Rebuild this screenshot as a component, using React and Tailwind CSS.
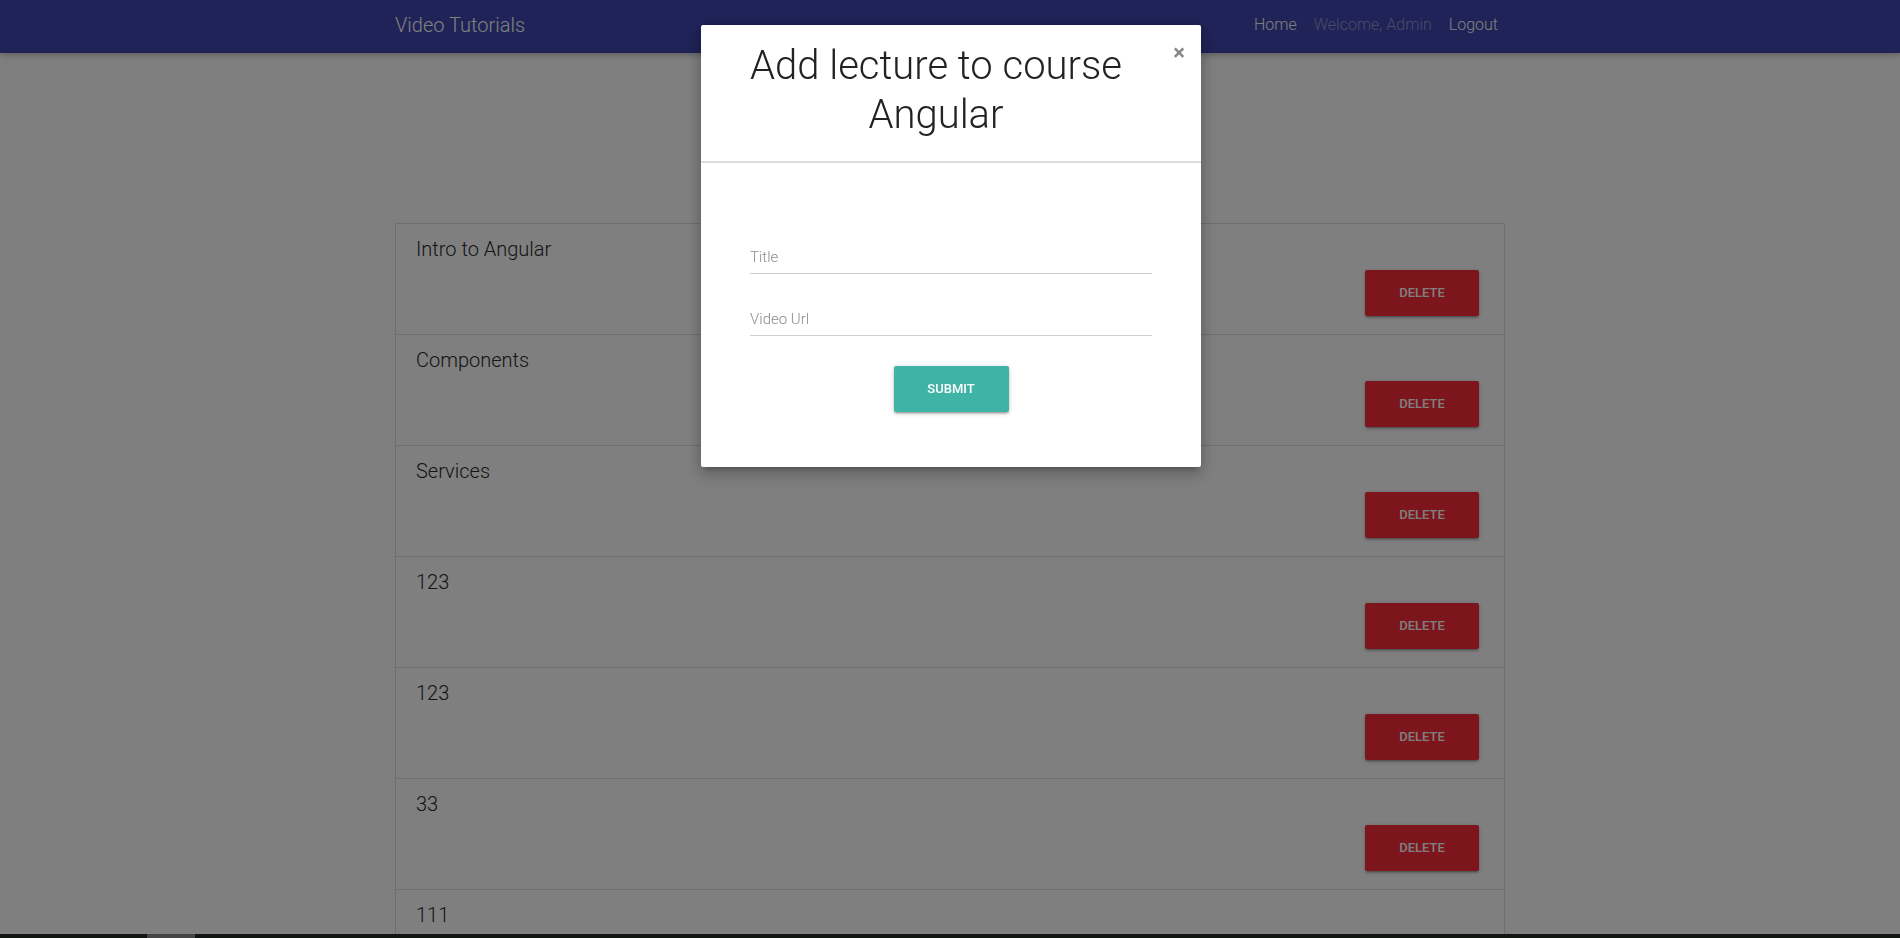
import React from 'react';

const lectures = [
  { id: 1, title: 'Intro to Angular' },
  { id: 2, title: 'Components' },
  { id: 3, title: 'Services' },
  { id: 4, title: '123' },
  { id: 5, title: '123' },
  { id: 6, title: '33' },
  { id: 7, title: '111' },
];

const Navbar = () => (
  <nav className="h-[53px] bg-[#3e46ae] shadow-[0_2px_5px_0_rgba(0,0,0,0.16),0_2px_10px_0_rgba(0,0,0,0.12)]">
    <div className="mx-auto flex h-full w-[1110px] items-center justify-between pb-[4px]">
      <a href="#" className="text-[20px] font-light text-white">Video Tutorials</a>
      <ul className="flex items-center gap-[17px] pr-[7px] text-[16px] font-light">
        <li><a href="#" className="text-white">Home</a></li>
        <li><span className="text-white/45">Welcome, Admin</span></li>
        <li><a href="#" className="text-white">Logout</a></li>
      </ul>
    </div>
  </nav>
);

const LectureRow = ({ title }) => (
  <li className="flex h-[111px] flex-col border-b border-[#dddddd] px-[20px] pt-[10px]">
    <span className="text-[20px] font-light leading-[30px] text-[#2a2a2a]">{title}</span>
    <button className="mr-[5px] mt-[6px] h-[46px] w-[114px] self-end rounded-[2px] bg-[#fa2a3a] text-[13px] font-medium uppercase text-white shadow-[0_2px_2px_0_rgba(0,0,0,0.14),0_3px_1px_-2px_rgba(0,0,0,0.12),0_1px_5px_0_rgba(0,0,0,0.2)]">
      Delete
    </button>
  </li>
);

const AddLectureModal = () => (
  <div className="fixed left-[701px] top-[25px] z-20 w-[500px] rounded-[2px] bg-white shadow-[0_8px_17px_2px_rgba(0,0,0,0.14),0_3px_14px_2px_rgba(0,0,0,0.12),0_5px_5px_-3px_rgba(0,0,0,0.2)]">
    {/* Header */}
    <div className="relative border-b-2 border-[#dcdcdc] pb-[22px] pl-[24px] pr-[54px] pt-[16px]">
      <h3 className="text-center text-[40px] font-light leading-[49px] text-[#222]">
        Add lecture to course Angular
      </h3>
      <button className="absolute right-[16px] top-[17px] text-[22px] font-bold leading-none text-[#888]">×</button>
    </div>

    {/* Form */}
    <form className="flex flex-col px-[49px] pb-[55px] pt-[78px]">
      <input
        type="text"
        placeholder="Title"
        className="h-[33px] border-b border-[#cfcfcf] bg-transparent text-[15px] font-light text-[#333] outline-none placeholder:text-[#8c8c8c]"
      />
      <input
        type="text"
        placeholder="Video Url"
        className="mt-[29px] h-[33px] border-b border-[#cfcfcf] bg-transparent text-[15px] font-light text-[#333] outline-none placeholder:text-[#8c8c8c]"
      />
      <button
        type="button"
        className="mt-[30px] h-[46px] w-[115px] self-center rounded-[2px] bg-[#3fb3a6] text-[13px] font-medium uppercase text-white shadow-[0_2px_2px_0_rgba(0,0,0,0.14),0_3px_1px_-2px_rgba(0,0,0,0.12),0_1px_5px_0_rgba(0,0,0,0.2)]"
      >
        Submit
      </button>
    </form>
  </div>
);

export default function App() {
  return (
    <div className="h-screen overflow-hidden bg-white font-['Roboto',sans-serif]">
      <Navbar />

      <main className="mx-auto mt-[170px] w-[1110px]">
        <ul className="border border-b-0 border-[#dddddd]">
          {lectures.map((lecture) => (
            <LectureRow key={lecture.id} title={lecture.title} />
          ))}
        </ul>
      </main>

      {/* Modal backdrop */}
      <div className="fixed inset-0 z-10 bg-black/50" />
      <AddLectureModal />

      {/* bottom scrollbar strip */}
      <div className="fixed inset-x-0 bottom-0 z-30 h-[4px] bg-[#121612]">
        <div className="ml-[147px] h-full w-[48px] bg-[#454545]" />
      </div>
    </div>
  );
}
